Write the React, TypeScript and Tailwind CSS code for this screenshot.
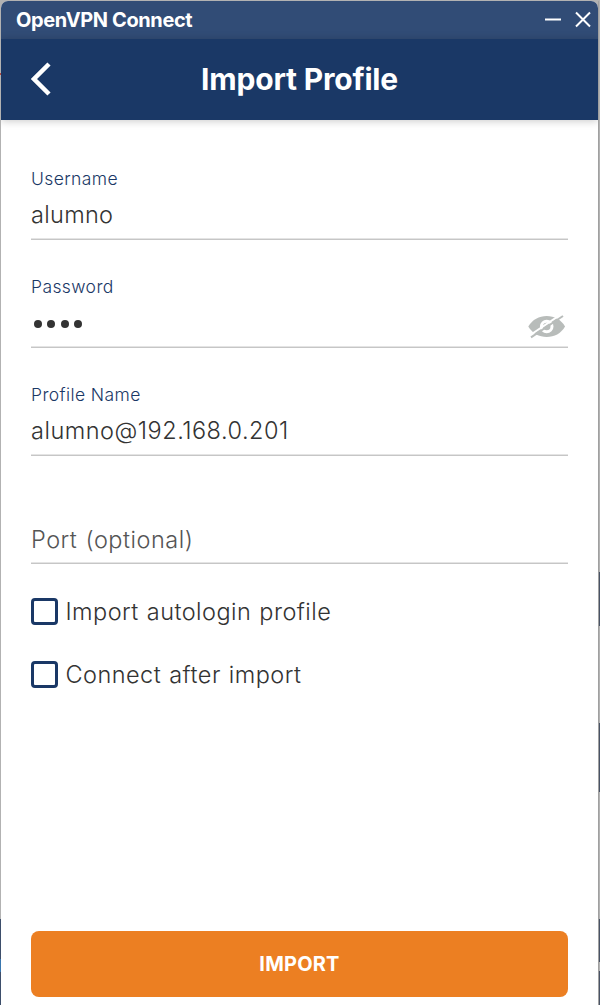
import { useState } from "react";

function Field({ label, children }: { label?: string; children: React.ReactNode }) {
  return (
    <div className="flex h-[108px] flex-col border-b border-[#c6c6c6] pt-[35px] shadow-[inset_0_-1px_0_#e4e4e4]">
      <div className="h-6 text-[17.5px] leading-6 font-light tracking-[0.4px] text-[#1a3866]">{label}</div>
      <div className="flex h-12 items-center justify-between text-[23.5px] font-light tracking-[0.5px] text-[#333333]">
        {children}
      </div>
    </div>
  );
}

function EyeOff() {
  return (
    <svg width="38" height="24" viewBox="0 0 38 24" className="mt-[7px] mr-[2px]">
      <path d="M0.3 11.5C4.5 4.5 11 1 18.700 1s14.200 3.500 18.400 10.500C32.900 18.500 26.400 22 18.700 22S4.500 18.500.3 11.500z" fill="#b8bcba" />
      <circle cx="18.700" cy="11.500" r="5.300" fill="none" stroke="#fff" strokeWidth="3" />
      <path d="M1.500 20.500L33.500 -1" stroke="#fff" strokeWidth="2" />
      <path d="M3 22.300L35 1" stroke="#b8bcba" strokeWidth="2" />
    </svg>
  );
}

function Check({ label }: { label: string }) {
  const [on, setOn] = useState(false);
  return (
    <button onClick={() => setOn(!on)} className="flex h-[27px] items-center gap-[7.5px] text-[23.5px] font-light tracking-[0.45px] text-[#333333] [word-spacing:1px]">
      <span className="flex size-[27px] items-center justify-center rounded-[4px] border-3 border-[#1a3866]">
        {on && <span className="size-3 bg-[#1a3866]" />}
      </span>
      <span className="whitespace-nowrap">{label}</span>
    </button>
  );
}

export default function App() {
  return (
    <div className="flex h-[1005px] w-[600px] bg-[#b2b2b2] pt-px font-['Inter',sans-serif]">
      <div className="flex w-px shrink-0 flex-col">
        <div className="h-[72px]" />
        <div className="h-[2px] bg-[#b84a40]" />
        <div className="h-[844px]" />
        <div className="h-10 bg-[#3d4e6b]" />
        <div className="h-[13px] bg-[#3976ae]" />
        <div className="flex-1 bg-[#3d4e6b]" />
      </div>
      <main className="flex w-[597px] shrink-0 flex-col overflow-hidden rounded-t-[7px] bg-white">
        <div className="flex h-[38px] shrink-0 items-center justify-between bg-[#314c76] pr-[6px] pl-[15px] text-white">
          <span className="text-[20px] font-bold tracking-[-0.4px]">OpenVPN Connect</span>
          <div className="flex items-center gap-[13px]">
            <svg width="17" height="18" viewBox="0 0 17 18"><path d="M1 8.500h16" stroke="white" strokeWidth="2" /></svg>
            <svg width="18" height="18" viewBox="0 0 18 18"><path d="M2 1.500l14 14M16 1.500L2 15.500" stroke="white" strokeWidth="2" /></svg>
          </div>
        </div>
        <header className="grid h-[81px] shrink-0 grid-cols-[60px_1fr_60px] items-center bg-[#1a3866] text-white shadow-[0_1px_8px_rgba(0,0,0,0.22)]">
          <svg width="20" height="34" viewBox="0 0 20 34" className="-mt-0.5 ml-[30px]">
            <path d="M18 2L3 17l15 15" fill="none" stroke="white" strokeWidth="4.500" />
          </svg>
          <h1 className="text-center text-[30px] font-bold tracking-[-0.2px]">Import Profile</h1>
        </header>
        <form className="flex flex-1 flex-col px-[30px] pt-3" onSubmit={(e) => e.preventDefault()}>
          <Field label="Username"><span className="tracking-[0.3px]">alumno</span></Field>
          <Field label="Password">
            <span className="flex gap-[5.600px] pt-px pl-[2.500px]">
              <i className="size-[8px] rounded-full bg-[#333]" />
              <i className="size-[8px] rounded-full bg-[#333]" />
              <i className="size-[8px] rounded-full bg-[#333]" />
              <i className="size-[8px] rounded-full bg-[#333]" />
            </span>
            <EyeOff />
          </Field>
          <Field label="Profile Name">alumno@192.168.0.201</Field>
          <Field><span className="pt-0.5 text-[#555] [word-spacing:1px]">Port (optional)</span></Field>
          <div className="flex flex-col gap-9 pt-[34px]">
            <Check label="Import autologin profile" />
            <Check label="Connect after import" />
          </div>
          <button className="mt-auto mb-2 h-[66px] rounded-[8px] bg-[#ec7f22] text-[20px] font-bold tracking-[0.2px] text-white">IMPORT</button>
        </form>
      </main>
      <div className="w-px shrink-0 bg-[#a0a0a0]" />
      <div className="flex w-px shrink-0 flex-col">
        <div className="h-[571px]" />
        <div className="h-[54px] bg-[#495365]" />
        <div className="h-[97px]" />
        <div className="h-[69px] bg-[#495365]" />
        <div className="h-[127px]" />
        <div className="h-[43px] bg-[#495365]" />
        <div className="h-[9px]" />
        <div className="flex-1 bg-[#495365]" />
      </div>
    </div>
  );
}
